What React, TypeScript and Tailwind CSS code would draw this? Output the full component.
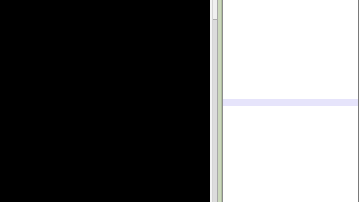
export default function App() {
  return (
    <div className="flex h-[202px] w-[360px] overflow-hidden bg-white">
      <div className="h-full w-[210px] bg-black" />
      <div className="h-full w-[2px] bg-[#f4f4f4]" />
      <div className="h-full w-[1px] bg-[#d4d4d4]" />
      <div className="flex h-full w-[4px] flex-col bg-[#dcdcdc]">
        <div className="h-[20px] border-b border-[#b0b0b0] bg-[#f0f0f0]" />
      </div>
      <div className="h-full w-[1px] bg-[#a8a8a8]" />
      <div className="h-full w-[3px] bg-[#ccd8bd]" />
      <div className="h-full w-[1px] bg-[#b0bfa0]" />
      <div className="h-full w-[1px] bg-[#8c8c8c]" />
      <div className="flex h-full flex-1 flex-col">
        <div className="h-[99px]" />
        <div className="h-[7px] bg-[#e6e4fb]" />
      </div>
      <div className="h-full w-[1px] bg-[#7a7a7a]" />
      <div className="h-full w-[1px] bg-white" />
    </div>
  );
}
